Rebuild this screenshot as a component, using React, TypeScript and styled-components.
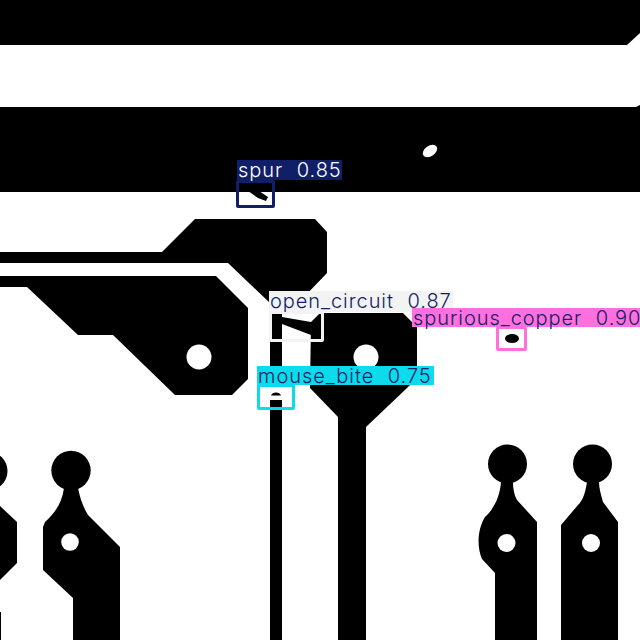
import styled, { createGlobalStyle } from 'styled-components';

const GlobalStyle = createGlobalStyle`
  html, body {
    margin: 0;
    padding: 0;
    background: #fff;
  }
`;

const detections = [
  { name: 'spur 0.85', color: '#111f68', ink: '#ffffff', box: [236, 180, 39, 28], tag: [237, 160, 105, 20] },
  { name: 'open_circuit 0.87', color: '#f3f3f3', ink: '#111f68', box: [269, 311, 55, 31], tag: [269, 291, 184, 21] },
  { name: 'mouse_bite 0.75', color: '#0bdbeb', ink: '#111f68', box: [257, 384, 38, 26], tag: [257, 366, 177, 19] },
  { name: 'spurious_copper 0.90', color: '#ff6fdd', ink: '#111f68', box: [496, 326, 31, 25], tag: [412, 308, 228, 19] },
];

export default function App() {
  return (
    <Canvas>
      <GlobalStyle />
      <Board viewBox="0 0 640 640">
        <path d="M0 0H640V33L627 45H0Z" />
        <path d="M0 107H636L640 105V192H0Z" />
        <path d="M0 252H162L195 219H315L327 232V273L305 296H270V303L228 263H0Z" />
        <path d="M0 276H216L248 308V379L232 395H175L113 335H78L27 287H0Z" />
        <path d="M320 313H403L417 327V378L407 388L366 427V640H338V417L310 388L311 322Z" />
        <path d="M270 313H282V317L311 322V335L282 324V385H270Z" />
        <path d="M270 400H282V640H270Z" />
        <path d="M271 395.5C272 391.5 280 391.5 281 395.5Z" />
        {/* pads along the bottom edge */}
        <circle cx="-12" cy="471" r="19.5" />
        <path d="M0 506L17 522V563L0 580Z" />
        <path d="M0 612H1V640H0Z" />
        <circle cx="71" cy="470.5" r="19.7" />
        <path d="M64 488C62 503 55 513 45 522L43 527V570L73 598V640H120V547L88 515C83 507 80 498 78 488Z" />
        <circle cx="507.5" cy="464" r="19.5" />
        <path d="M501 482C500 495 495 508 485 517C477 530 477 548 482 559L495 573V640H537V522L517 500C514 495 513 488 513 482Z" />
        <circle cx="592.5" cy="464" r="19.5" />
        <path d="M587 482C585 495 582 501 578 505L561 525V640H618V522L603 502C601 495 599 488 599 482Z" />
        {/* defects */}
        <path d="M248 191L259 191L268 197L266 201L258 198Z" />
        <ellipse cx="512" cy="338.5" rx="7" ry="4.5" />
        <g fill="#fff">
          <ellipse cx="430" cy="151" rx="8" ry="5.2" transform="rotate(-35 430 151)" />
          <circle cx="199" cy="357" r="12.5" />
          <circle cx="366" cy="357" r="12.5" />
          <circle cx="70" cy="542" r="8.8" />
          <circle cx="506.5" cy="543" r="9" />
          <circle cx="591" cy="543" r="9" />
        </g>
      </Board>
      {detections.map((d) => (
        <div key={d.name}>
          <BoxFrame $rect={d.box} $color={d.color} />
          <Tag $rect={d.tag} $color={d.color} $ink={d.ink}>
            {d.name}
          </Tag>
        </div>
      ))}
    </Canvas>
  );
}

const Canvas = styled.div`
  position: relative;
  width: 640px;
  height: 640px;
  overflow: hidden;
  background: #fff;
`;

const Board = styled.svg`
  display: block;
  width: 640px;
  height: 640px;
  fill: #000;
`;

const BoxFrame = styled.div<{ $rect: number[]; $color: string }>`
  position: absolute;
  left: ${(p) => p.$rect[0]}px;
  top: ${(p) => p.$rect[1]}px;
  width: ${(p) => p.$rect[2]}px;
  height: ${(p) => p.$rect[3]}px;
  box-sizing: border-box;
  border: 3px solid ${(p) => p.$color};
  border-radius: 2px;
`;

const Tag = styled.div<{ $rect: number[]; $color: string; $ink: string }>`
  position: absolute;
  left: ${(p) => p.$rect[0]}px;
  top: ${(p) => p.$rect[1]}px;
  width: ${(p) => p.$rect[2]}px;
  height: ${(p) => p.$rect[3]}px;
  padding-left: 1px;
  box-sizing: border-box;
  background: ${(p) => p.$color};
  color: ${(p) => p.$ink};
  font-family: 'Inter', 'Liberation Sans', sans-serif;
  font-size: 20px;
  font-weight: 300;
  letter-spacing: 0.95px;
  word-spacing: 7px;
  line-height: 20px;
  white-space: pre;
`;
